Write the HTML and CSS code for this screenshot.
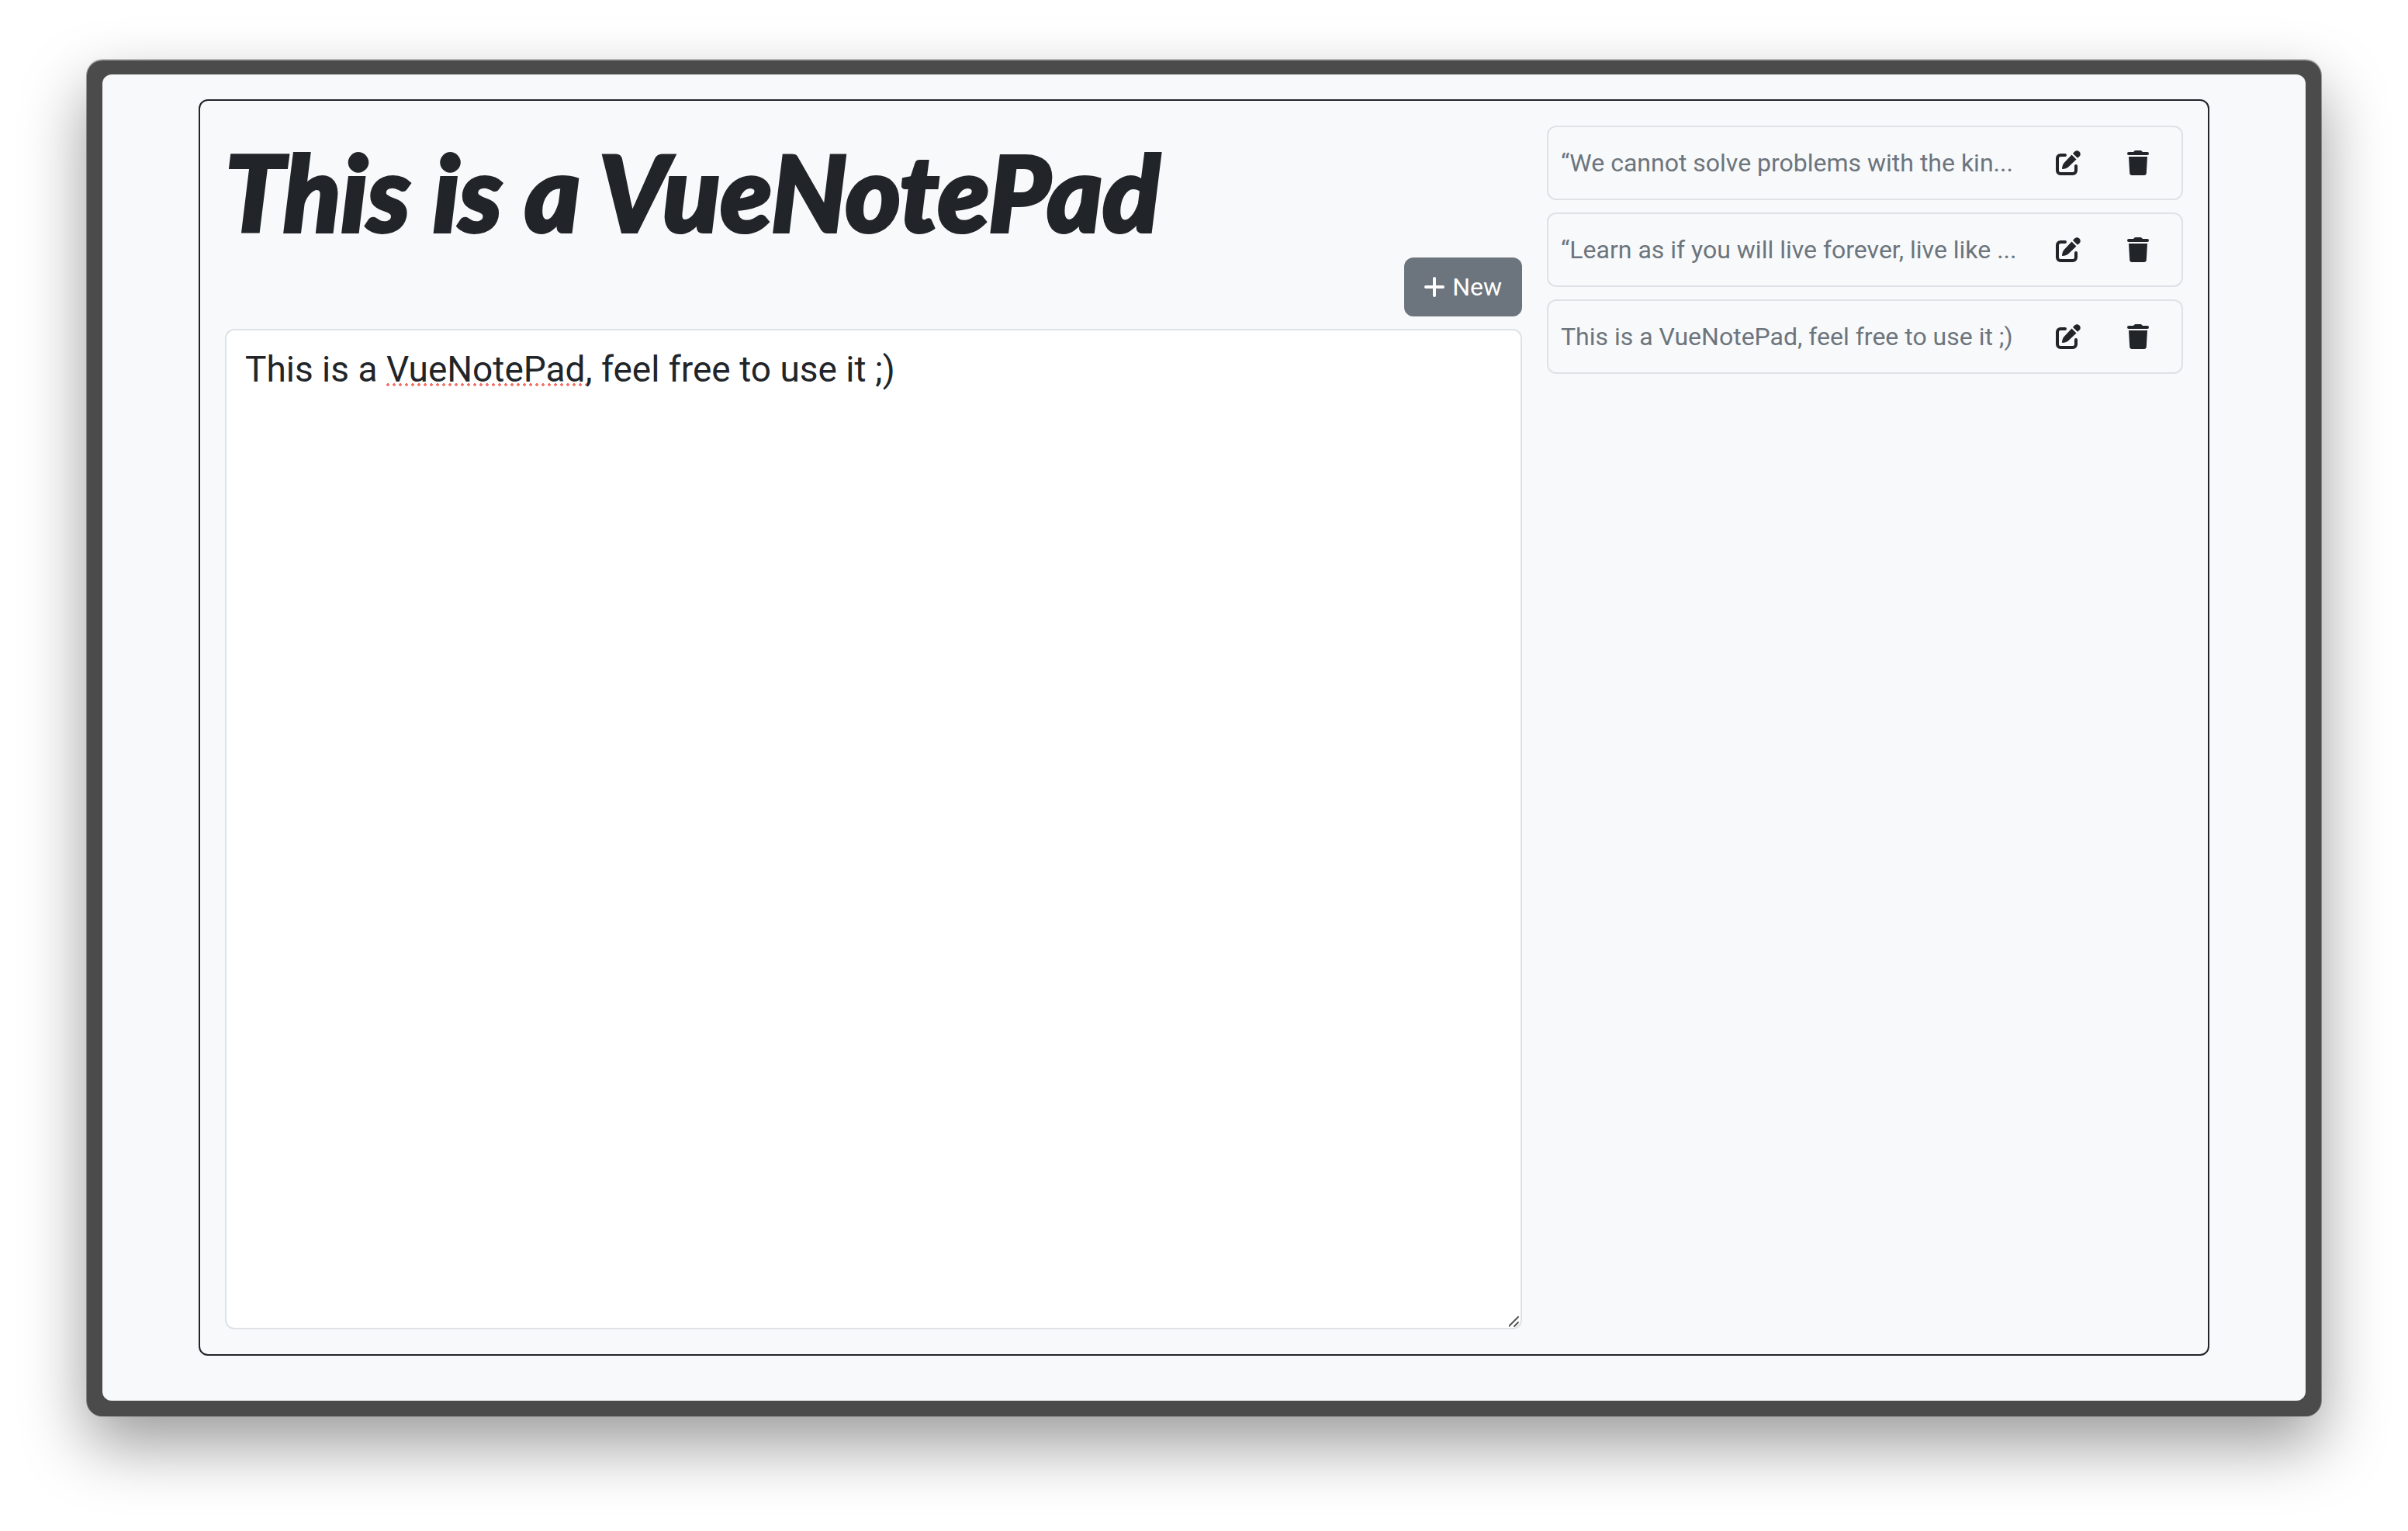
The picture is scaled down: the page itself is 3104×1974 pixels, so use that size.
FILE: index.html
```html
<!DOCTYPE html>
<html lang="en">
<head>
<meta charset="utf-8">
<meta name="viewport" content="width=device-width, initial-scale=1">
<title>VueNotePad</title>
<link rel="stylesheet" href="styles.css">
</head>
<body>
<svg class="sprite" aria-hidden="true">
  <symbol id="edit" viewBox="0 0 32 32">
    <path d="M12 6H6a4 4 0 0 0-4 4v16a4 4 0 0 0 4 4h16a4 4 0 0 0 4-4v-6" fill="none" stroke="currentColor" stroke-width="4" stroke-linecap="round"/>
    <path d="M20.500 5.500l6 6L16 21.500c-2 1.600-4.500 2.500-7.300 2.500-.5 0-.8-.3-.7-.8.300-2.800 1-5.200 2.700-7.200z"/>
    <path d="M22 4l1.800-2.200c2-2 4.500-2.300 6.500-.3s1.800 4.700-.2 6.500L28 9.800z"/>
  </symbol>
  <symbol id="trash" viewBox="0 0 28 32">
    <path d="M8 2l1.200-1.300Q9.800 0 10.800 0h6.400q1 0 1.600.7L20 2h6a2 2 0 0 1 0 4H2a2 2 0 0 1 0-4z"/>
    <path d="M2 8h24l-1.200 21.200A3 3 0 0 1 21.800 32H6.200a3 3 0 0 1-3-2.800z"/>
  </symbol>
  <symbol id="plus" viewBox="0 0 26 26">
    <path d="M13 2v22M2 13h22" fill="none" stroke="currentColor" stroke-width="4" stroke-linecap="round"/>
  </symbol>
</svg>
<div class="window">
  <div class="page">
    <main class="card">
      <section class="writer">
        <h1 class="title">This is a VueNotePad</h1>
        <div class="toolbar">
          <button class="new" type="button"><svg class="icon-plus" aria-hidden="true"><use href="#plus"/></svg>New</button>
        </div>
        <div class="editor">
          <textarea class="note" aria-label="Note" spellcheck="false">This is a VueNotePad, feel free to use it ;)</textarea>
          <span class="misspelling" aria-hidden="true"></span>
        </div>
      </section>
      <ul class="list">
        <li class="item">
          <span class="preview">“We cannot solve problems with the kin...</span>
          <button class="action" type="button" aria-label="Edit note"><svg class="icon-edit" aria-hidden="true"><use href="#edit"/></svg></button>
          <button class="action" type="button" aria-label="Delete note"><svg class="icon-trash" aria-hidden="true"><use href="#trash"/></svg></button>
        </li>
        <li class="item">
          <span class="preview">“Learn as if you will live forever, live like ...</span>
          <button class="action" type="button" aria-label="Edit note"><svg class="icon-edit" aria-hidden="true"><use href="#edit"/></svg></button>
          <button class="action" type="button" aria-label="Delete note"><svg class="icon-trash" aria-hidden="true"><use href="#trash"/></svg></button>
        </li>
        <li class="item">
          <span class="preview">This is a VueNotePad, feel free to use it ;)</span>
          <button class="action" type="button" aria-label="Edit note"><svg class="icon-edit" aria-hidden="true"><use href="#edit"/></svg></button>
          <button class="action" type="button" aria-label="Delete note"><svg class="icon-trash" aria-hidden="true"><use href="#trash"/></svg></button>
        </li>
      </ul>
    </main>
  </div>
</div>
</body>
</html>
```
FILE: styles.css
```css
* { box-sizing: border-box; }

body {
  margin: 0;
  min-height: 100vh;
  padding: 78px 112px 148px;
  display: flex;
  background: #fff;
  color: #212529;
  font: 32px/48px Roboto, "Liberation Sans", sans-serif;
}

.sprite { display: none; }
svg { display: block; fill: currentColor; }

.window {
  flex: 1;
  display: flex;
  padding: 18px 20px 20px;
  border-radius: 20px;
  background: #4b4b4b;
  box-shadow: 0 0 0 1px rgba(0, 0, 0, .2), 0 -1px 0 1px rgba(0, 0, 0, .2), 0 36px 84px rgba(0, 0, 0, .4);
}

.page {
  flex: 1;
  display: flex;
  padding: 32px 124px 58px;
  border-radius: 12px;
  background: #f8f9fa;
}

.card {
  flex: 1;
  display: grid;
  grid-template-columns: repeat(12, minmax(0, 1fr));
  column-gap: 32px;
  padding: 32px;
  border: 2px solid #212529;
  border-radius: 12px;
}

.writer {
  grid-column: span 8;
  display: flex;
  flex-direction: column;
}

.title {
  margin: 0;
  padding: 8px 0;
  font: italic 900 136px/154px Lato, sans-serif;
  -webkit-text-stroke: 4px currentColor;
  white-space: nowrap;
}

.toolbar {
  display: flex;
  justify-content: flex-end;
  margin-bottom: 16px;
}

.new {
  display: flex;
  align-items: center;
  gap: 10px;
  height: 76px;
  padding: 0 26px;
  border: 0;
  border-radius: 12px;
  background: #6c757d;
  color: #fff;
  font: inherit;
}

.icon-plus { width: 26px; height: 26px; }

.editor {
  flex: 1;
  display: flex;
  position: relative;
}

.note {
  flex: 1;
  min-width: 0;
  padding: 14px 24px;
  border: 2px solid #dee2e6;
  border-radius: 12px;
  outline: 0;
  background: #fff;
  color: inherit;
  font: 46px/72px Roboto, "Liberation Sans", sans-serif;
  resize: vertical;
}

.note::-webkit-scrollbar { width: 20px; height: 20px; }
.note::-webkit-resizer {
  background: url("data:image/svg+xml,%3Csvg xmlns='http://www.w3.org/2000/svg' width='20' height='20'%3E%3Cpath d='M5 18L17 6M12 18l5-5' stroke='%23555' stroke-width='2' stroke-linecap='round'/%3E%3C/svg%3E") no-repeat right bottom;
}

/* Spell-check dots under the unknown word */
.misspelling {
  position: absolute;
  left: 206px;
  top: 70px;
  width: 260px;
  height: 4px;
  background: radial-gradient(circle, #f4756b 2px, transparent 2px) 0 0 / 8px 4px;
  pointer-events: none;
}

.list {
  grid-column: span 4;
  margin: 0;
  padding: 0;
  display: flex;
  flex-direction: column;
  gap: 16px;
  list-style: none;
}

.item {
  display: flex;
  align-items: center;
  height: 96px;
  padding: 0 16px;
  border: 2px solid #dee2e6;
  border-radius: 12px;
}

.preview {
  flex: 1;
  min-width: 0;
  overflow: hidden;
  color: #6c757d;
  white-space: nowrap;
}

.action {
  padding: 22px 26px;
  border: 0;
  background: none;
  color: inherit;
}

.action + .action { margin-left: 8px; }

.icon-edit { width: 32px; height: 32px; }
.icon-trash { width: 28px; height: 32px; }
```
